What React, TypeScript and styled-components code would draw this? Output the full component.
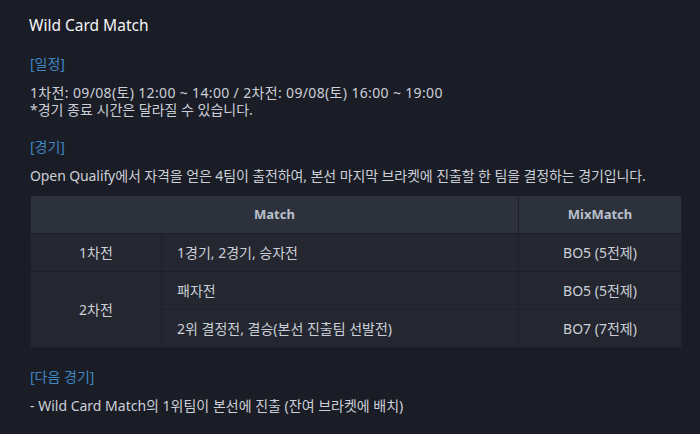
import React from 'react';
import styled, { createGlobalStyle } from 'styled-components';

const GlobalStyle = createGlobalStyle`
  html, body {
    margin: 0;
    padding: 0;
    background: #1b1d26;
  }
  body {
    font-family: "Noto Sans", "Noto Sans CJK KR", sans-serif;
  }
`;

const Page = styled.div`
  width: 700px;
  height: 434px;
  box-sizing: border-box;
  padding: 15px 19px 0 30px;
  background: #1b1d26;
  color: #cbcfd8;
  font-size: 14px;
  line-height: 17px;
  overflow: hidden;
`;

const Title = styled.h2`
  margin: 0 0 0 -1px;
  font-size: 15.5px;
  line-height: 20px;
  font-weight: 400;
  color: #f4f5f8;
`;

const Section = styled.section`
  margin-top: 20px;
`;

const Label = styled.div`
  color: #3f86c2;
  margin-bottom: 12px;
`;

const Text = styled.p<{ $tracking?: number }>`
  margin: 0;
  white-space: nowrap;
  letter-spacing: ${p => p.$tracking ?? 0}px;
`;

const Table = styled.table`
  margin-top: 12px;
  width: 651px;
  border-collapse: collapse;
  table-layout: fixed;
`;

const HeadCell = styled.th`
  height: 37px;
  box-sizing: border-box;
  padding: 0;
  background: #2d313b;
  color: #b9c0cd;
  font-size: 13px;
  font-weight: 700;
  text-align: center;
  border: 1px solid #1d2029;
  border-top: none;
`;

const Cell = styled.td<{ $align?: 'left' | 'center' }>`
  height: 38px;
  box-sizing: border-box;
  padding: 0 ${p => (p.$align === 'left' ? '15px' : '0')};
  background: #242730;
  color: #cbcfd8;
  text-align: ${p => p.$align ?? 'center'};
  border: 1px solid #1d2029;
  white-space: nowrap;
`;

const rows = [
  { round: '1차전', span: 1, game: '1경기, 2경기, 승자전', format: 'BO5 (5전제)' },
  { round: '2차전', span: 2, game: '패자전', format: 'BO5 (5전제)' },
  { round: null, span: 0, game: '2위 결정전, 결승(본선 진출팀 선발전)', format: 'BO7 (7전제)' },
];

export default function App() {
  return (
    <Page>
      <GlobalStyle />
      <Title>Wild Card Match</Title>

      <Section>
        <Label>[일정]</Label>
        <Text $tracking={0.35}>1차전: 09/08(토) 12:00 ~ 14:00 / 2차전: 09/08(토) 16:00 ~ 19:00</Text>
        <Text>*경기 종료 시간은 달라질 수 있습니다.</Text>
      </Section>

      <Section>
        <Label>[경기]</Label>
        <Text $tracking={-0.1}>Open Qualify에서 자격을 얻은 4팀이 출전하여, 본선 마지막 브라켓에 진출할 한 팀을 결정하는 경기입니다.</Text>
        <Table>
          <colgroup>
            <col style={{ width: 131 }} />
            <col style={{ width: 357 }} />
            <col style={{ width: 163 }} />
          </colgroup>
          <thead>
            <tr>
              <HeadCell colSpan={2}>Match</HeadCell>
              <HeadCell>MixMatch</HeadCell>
            </tr>
          </thead>
          <tbody>
            {rows.map((r, i) => (
              <tr key={i}>
                {r.round && <Cell rowSpan={r.span}>{r.round}</Cell>}
                <Cell $align="left">{r.game}</Cell>
                <Cell>{r.format}</Cell>
              </tr>
            ))}
          </tbody>
        </Table>
      </Section>

      <Section>
        <Label>[다음 경기]</Label>
        <Text>- Wild Card Match의 1위팀이 본선에 진출 (잔여 브라켓에 배치)</Text>
      </Section>
    </Page>
  );
}
